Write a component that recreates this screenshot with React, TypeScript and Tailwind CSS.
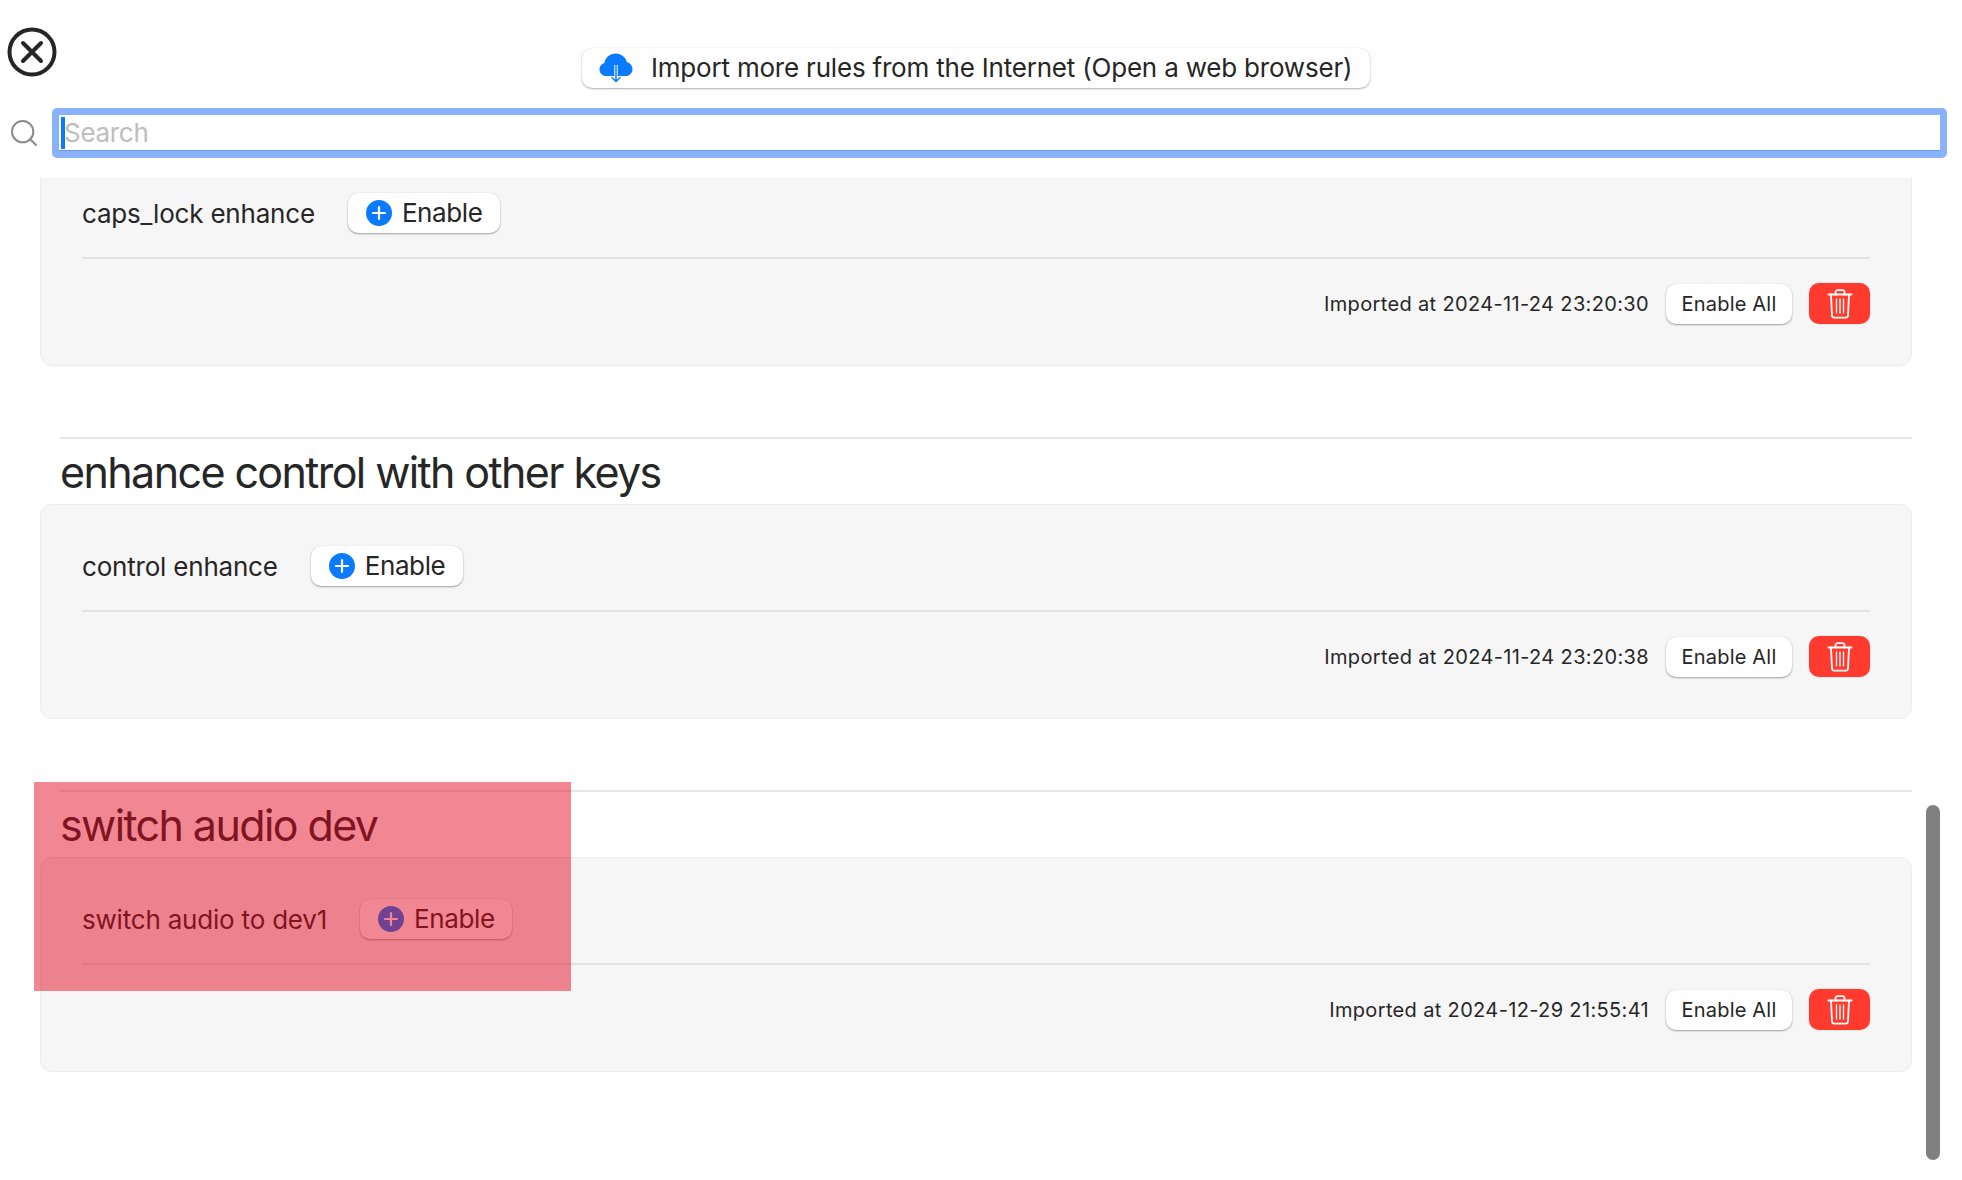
import React from "react";
import { Search } from "lucide-react";

type Rule = {
  title?: string;
  label: string;
  importedAt: string;
};

const RULES: Rule[] = [
  { label: "caps_lock enhance", importedAt: "2024-11-24 23:20:30" },
  { title: "enhance control with other keys", label: "control enhance", importedAt: "2024-11-24 23:20:38" },
  { title: "switch audio dev", label: "switch audio to dev1", importedAt: "2024-12-29 21:55:41" },
];

function CloseIcon() {
  return (
    <svg width="50" height="50" viewBox="0 0 50 50" fill="none" stroke="#262626" strokeLinecap="round">
      <circle cx="25" cy="25" r="22.5" strokeWidth="4" />
      <path d="M16 16 34 34M34 16 16 34" strokeWidth="4" />
    </svg>
  );
}

function CloudIcon() {
  return (
    <svg width="34" height="30" viewBox="0 0 34 30" fill="none">
      <path
        d="M7.500 23C3.400 23 .5 19.900.5 16.400c0-3 2-5.500 4.900-6.300C6 4.400 11 .4 16.800.4c5.400 0 9.900 3.600 11 8.500 3.300.9 5.700 3.800 5.700 7.300 0 3.800-3 6.800-7 6.800H7.500Z"
        fill="#0a7aff"
      />
      <path d="M17 12v16" stroke="#ffffff" strokeWidth="3.500" />
      <path d="M17 12v16.500M13 24.500l4 4 4-4" stroke="#0a7aff" strokeWidth="1.500" strokeLinecap="round" strokeLinejoin="round" />
    </svg>
  );
}

function PlusIcon() {
  return (
    <svg width="26" height="26" viewBox="0 0 26 26" className="shrink-0">
      <circle cx="13" cy="13" r="13" fill="#0a7aff" />
      <path d="M13 7v12M7 13h12" stroke="#ffffff" strokeWidth="2.200" strokeLinecap="round" />
    </svg>
  );
}

function TrashIcon() {
  return (
    <svg width="26" height="30" viewBox="0 0 26 30" fill="none" stroke="#ffffff" strokeWidth="1.800" strokeLinecap="round" strokeLinejoin="round">
      <path d="M1.500 5.500h23" />
      <path d="M8.500 5.500V3.200c0-1.100.9-2 2-2h5c1.100 0 2 .9 2 2v2.300" />
      <path d="M4 5.500l1 21c.1 1.200 1 2.200 2.200 2.200h11.600c1.200 0 2.100-1 2.200-2.200l1-21" />
      <path d="M9.500 10v14M13 10v14M16.500 10v14" strokeWidth="1.300" />
    </svg>
  );
}

function RuleCard({ rule }: { rule: Rule }) {
  return (
    <div className="rounded-[12px] border border-[#ececec] bg-[#f6f6f6] px-[41px] pb-[41px] pt-[41px]">
      <div className="flex items-center gap-[33px] pb-[24px]">
        <span className="h-[40px] pt-[1px] text-[26px] leading-[40px] tracking-[-0.2px] text-[#262626]">{rule.label}</span>
        <button className="flex h-[40px] w-[152px] items-center gap-[10px] rounded-[10px] bg-white pb-[2px] pl-[18px] text-[26px] tracking-[-0.4px] text-[#262626] shadow-[0_1px_2px_rgba(0,0,0,0.35),0_0_1px_rgba(0,0,0,0.15)]">
          <span className="mt-[2px] flex">
            <PlusIcon />
          </span>
          Enable
        </button>
      </div>
      <div className="h-[2px] bg-[#e2e2e2]" />
      <div className="flex items-center justify-end pt-[24px]">
        <span className="text-[20px] tracking-[0.35px] text-[#262626]">Imported at {rule.importedAt}</span>
        <button className="ml-[17px] h-[40px] w-[126px] rounded-[10px] bg-white pt-[1px] text-[20px] tracking-[0.2px] text-[#262626] shadow-[0_1px_2px_rgba(0,0,0,0.35),0_0_1px_rgba(0,0,0,0.15)]">
          Enable All
        </button>
        <button className="ml-[17px] flex h-[41px] w-[61px] items-center justify-center rounded-[10px] bg-[#ff3b30] shadow-[0_0_2px_rgba(0,0,0,0.2)]">
          <TrashIcon />
        </button>
      </div>
    </div>
  );
}

export default function App() {
  return (
    <div className="relative flex h-screen flex-col overflow-hidden bg-white font-['Inter',sans-serif]">
      <header className="relative z-10 h-[178px] shrink-0 bg-white">
        <div className="absolute left-[7px] top-[27px]">
          <CloseIcon />
        </div>
        <div className="flex justify-center pr-[10px] pt-[48px]">
          <button className="flex h-[40px] w-[788px] items-center gap-[18px] rounded-[10px] bg-white pl-[17px] text-[26px] tracking-[-0.2px] text-[#262626] shadow-[0_1px_2px_rgba(0,0,0,0.3),0_0_1px_rgba(0,0,0,0.2)]">
            <CloudIcon />
            <span className="pb-[2px]">Import more rules from the Internet (Open a web browser)</span>
          </button>
        </div>
        <div className="mt-[20px] flex items-center pl-[8px] pr-[15px]">
          <Search size={32} strokeWidth={1.5} className="shrink-0 text-[#8a8a8a]" />
          <div className="ml-[12px] flex h-[50px] flex-1 items-center rounded-[5px] border-[7px] border-[#8ab2fb] bg-white pl-[2px] shadow-[inset_0_-1px_0_#6f97e6]">
            <div className="h-[32px] w-[4px] bg-[#0a7aff]" />
            <span className="-ml-[1px] pb-[1px] text-[26px] tracking-[-0.3px] text-[#bdbdbd]">Search</span>
          </div>
        </div>
      </header>

      <main className="-mt-[27px] pl-[40px] pr-[50px]">
        {RULES.map((rule, index) => (
          <section key={rule.label} className={index > 0 ? "pt-[71px]" : ""}>
            {rule.title ? (
              <div className="ml-[20px] border-t-2 border-[#e6e6e6]">
                <h2 className="h-[65px] pt-[4px] text-[43px] leading-[58px] tracking-[-1.6px] text-[#262626]">{rule.title}</h2>
              </div>
            ) : null}
            <RuleCard rule={rule} />
          </section>
        ))}
      </main>

      <div className="absolute left-[34px] top-[782px] h-[209px] w-[537px] bg-[rgba(226,4,28,0.48)]" />
      <div className="absolute left-[1926px] top-[805px] h-[355px] w-[14px] rounded-full bg-[#808080]" />
    </div>
  );
}
